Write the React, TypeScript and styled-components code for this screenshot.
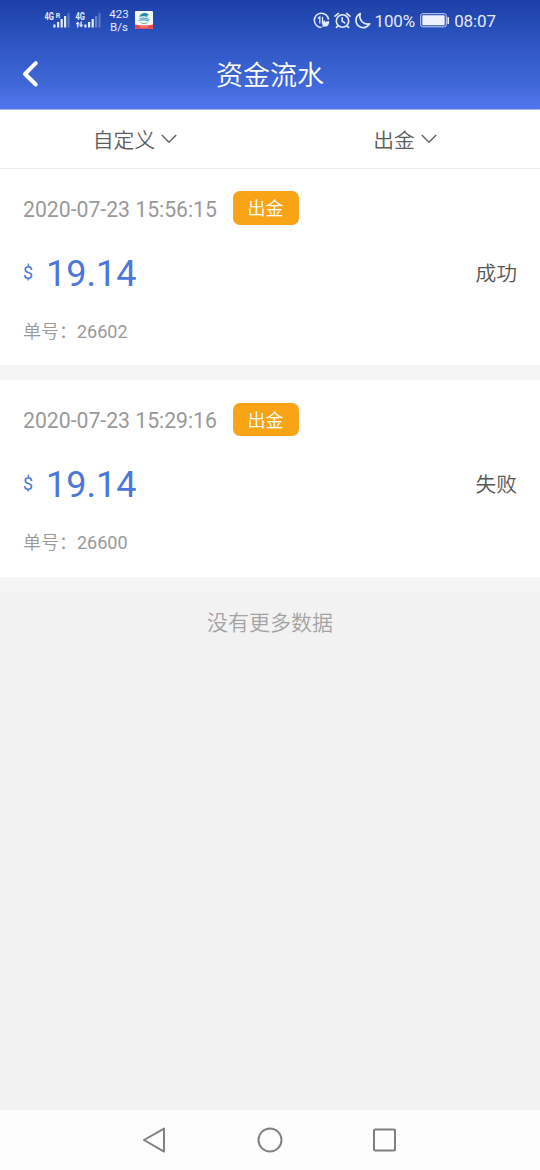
import React from 'react';
import styled, { createGlobalStyle } from 'styled-components';

const GlobalStyle = createGlobalStyle`
  * { box-sizing: border-box; }
  body {
    margin: 0;
    background: #f2f2f2;
    font-family: Roboto, "Noto Sans CJK SC", sans-serif;
  }
`;

const Screen = styled.div`
  display: flex;
  flex-direction: column;
  width: 100%;
  height: 1170px;
  background: #f2f2f2;
  overflow: hidden;
`;

const Header = styled.header`
  height: 110px;
  flex: none;
  color: #fff;
  background: linear-gradient(#1d3fa7 0, #2c53bf 38px, #4068d8 85px, #4f71ea 102px, #5075ea 100%);
  border-bottom: 1px solid #a5b6f0;
`;

const StatusBar = styled.div`
  display: flex;
  align-items: center;
  justify-content: space-between;
  height: 40px;
  padding: 0 44px 0 44px;
  color: #e4eafa;
`;

const StatusGroup = styled.div`
  display: flex;
  align-items: center;
`;

const Speed = styled.div`
  width: 20px;
  margin: 1px 6px 0 7px;
  font-size: 11.5px;
  line-height: 13px;
  text-align: center;
`;

const StatusText = styled.span<{ $gap?: number }>`
  margin-left: ${(p) => p.$gap ?? 0}px;
  padding-top: 1px;
  font-size: 17px;
  line-height: 20px;
  letter-spacing: -0.1px;
  white-space: nowrap;
`;

const StatusIcon = styled.svg<{ $gap?: number }>`
  display: block;
  flex: none;
  margin-left: ${(p) => p.$gap ?? 0}px;
`;

const TitleBar = styled.div`
  display: grid;
  grid-template-columns: 60px 1fr 60px;
  align-items: center;
  height: 69px;
`;

const BackButton = styled.button`
  display: flex;
  padding: 0 0 2px 21px;
  border: 0;
  background: none;
`;

const Title = styled.h1`
  margin: 3px 0 0;
  font-size: 27px;
  line-height: 40px;
  font-weight: 350;
  text-align: center;
`;

const Filters = styled.div`
  display: grid;
  grid-template-columns: 1fr 1fr;
  flex: none;
  height: 59px;
  background: #fff;
  border-bottom: 1px solid #eee;
`;

const Filter = styled.button`
  display: flex;
  align-items: center;
  justify-content: center;
  gap: 6px;
  padding: 0;
  border: 0;
  background: none;
  color: #5c5c5c;
  font: inherit;
  font-size: 20.8px;
  font-weight: 350;
`;

const Card = styled.article`
  display: flex;
  flex-direction: column;
  flex: none;
  height: 211.4px;
  padding: 22px 23px 0;
  background: #fff;
  border-bottom: 15px solid #f5f5f5;
`;

const CardTop = styled.div`
  display: flex;
  align-items: center;
  height: 34px;
`;

const DateText = styled.time`
  width: 209.5px;
  margin-top: 2px;
  color: #999;
  font-size: 21.2px;
  white-space: nowrap;
`;

const Badge = styled.span`
  width: 66px;
  height: 33.5px;
  padding-top: 1px;
  border-radius: 7px;
  background: #f8a416;
  color: #fff;
  font-size: 18px;
  font-weight: 350;
  line-height: 34px;
  text-align: center;
`;

const AmountRow = styled.div`
  display: flex;
  align-items: center;
  height: 50px;
  margin-top: 23px;
`;

const Currency = styled.span`
  width: 23px;
  padding-bottom: 2px;
  color: #4d76d8;
  font-size: 18px;
`;

const Amount = styled.strong`
  flex: 1;
  padding-top: 1px;
  color: #4d76dc;
  font-size: 36px;
  line-height: 50px;
  font-weight: 400;
`;

const Status = styled.span`
  padding-bottom: 3px;
  color: #555;
  font-size: 20.8px;
  font-weight: 350;
`;

const Order = styled.div`
  margin-top: 19px;
  color: #999;
  font-size: 18px;
  line-height: 30px;
`;

const OrderLabel = styled.span`
  font-weight: 350;
`;

const Empty = styled.p`
  flex: 1;
  margin: 0;
  padding-top: 15px;
  color: #a3a3a3;
  font-size: 21px;
  font-weight: 350;
  line-height: 32px;
  text-align: center;
`;

const NavBar = styled.nav`
  display: flex;
  align-items: center;
  justify-content: center;
  gap: 87px;
  flex: none;
  height: 60px;
  background: #fdfdfd;
`;

const NavIcon = styled.svg`
  display: block;
  fill: none;
  stroke: #808080;
  stroke-width: 2;
  stroke-linejoin: round;
`;

const Signal = ({ roaming }: { roaming?: boolean }) => (
  <StatusIcon width="27" height="20" $gap={roaming ? 0 : 4} fill="#e4eafa">
    <text x="0.5" y="9.5" fontSize="10.5" fontWeight="700" textLength="9.5" lengthAdjust="spacingAndGlyphs">4G</text>
    {roaming ? (
      <text x="11.8" y="7.5" fontSize="7" fontWeight="700">R</text>
    ) : (
      <path d="M2.7 11.5.5 14.2h1.5v3.3h1.4v-3.3h1.5zM6.1 17.5l2.2-2.7H6.8v-3.3H5.4v3.3H3.9z" />
    )}
    <rect x="9.3" y="14.5" width="2.2" height="3" />
    <rect x="13" y="12" width="2.2" height="5.5" />
    <rect x="16.6" y="9" width="2.2" height="8.5" />
    <rect x="20" y="6" width="2.2" height="11.5" opacity={roaming ? 1 : 0.35} />
    <rect x="23.5" y="3" width="2" height="14.5" opacity=".3" />
  </StatusIcon>
);

const AppIcon = () => (
  <StatusIcon width="18" height="18" viewBox="0 0 18 18">
    <rect width="18" height="18" rx="1" fill="#f4fafa" />
    <path d="M4 6C6 1.5 11 1 14 4L11.5 5 14.5 7C11 5 7 4.5 4 6Z" fill="#278ca2" />
    <path d="M4.5 7.5Q9 6.5 14.5 8.5M3.5 9.5Q9 8 14 10" stroke="#57a9c9" strokeWidth="1.2" fill="none" />
    <path d="M5.5 11.5c2 1.4 5 1.4 7 0" stroke="#73b893" fill="none" />
    <path d="M0 13.5q9 2 18 0V17a1 1 0 0 1-1 1H1a1 1 0 0 1-1-1Z" fill="#e34c50" />
    <path d="M5 16h8" stroke="#f5b2ac" strokeDasharray="1.5 .7" />
  </StatusIcon>
);

const DataIcon = () => (
  <StatusIcon width="17" height="17" viewBox="0 0 17 17" fill="none" stroke="#e4eafa" strokeWidth="1.5">
    <path d="M15.5 7.6A7.1 7.1 0 1 0 8.5 15.4" />
    <path d="M4.8 6.4 6.8 4.8v6.7M9.5 4.8v6.2l2.4-2.2" strokeWidth="1.3" />
    <path d="M9.5 12.5c1-3 3-3 6.8-3.3-.3 4-2.2 6.6-5.5 5.1l-1.5 1.3Z" fill="#e4eafa" stroke="none" />
  </StatusIcon>
);

const AlarmIcon = () => (
  <StatusIcon $gap={4} width="17" height="17" viewBox="0 0 17 17" fill="none" stroke="#e4eafa" strokeWidth="1.6" strokeLinecap="round">
    <circle cx="8.5" cy="9" r="6.2" />
    <path d="M8.2 5.7V9.2l2.5 1.6M1.1 4.2 4.4 1.4M15.9 4.2l-3.3-2.8M3.8 14 2.5 15.4M13.2 14l1.3 1.4" />
  </StatusIcon>
);

const MoonIcon = () => (
  <StatusIcon $gap={4} width="16" height="17" viewBox="0 0 16 17" fill="none" stroke="#e4eafa" strokeWidth="1.7" strokeLinejoin="round">
    <path d="M5.2 1.5C-.6 4.6-.2 12.8 5.3 15c3.9 1.5 7.6-.2 9.4-3.2C8.9 13.3 3.4 8.2 5.2 1.5Z" />
  </StatusIcon>
);

const BatteryIcon = () => (
  <StatusIcon $gap={5} width="30" height="15" viewBox="0 0 30 15">
    <rect x=".7" y=".7" width="25.6" height="13.1" rx="2" fill="none" stroke="#cbd5f4" strokeWidth="1" />
    <rect x="2.3" y="2.3" width="22.4" height="9.9" rx=".7" fill="#eceffc" />
    <rect x="27.4" y="4" width="1.6" height="7" rx=".5" fill="#e4eafa" />
  </StatusIcon>
);

const Chevron = () => (
  <svg width="16" height="10" viewBox="0 0 16 10" fill="none" stroke="#666" strokeWidth="1.5">
    <path d="M.8 1 8 8.2 15.2 1" />
  </svg>
);

const records = [
  { date: '2020-07-23 15:56:15', amount: '19.14', status: '成功', order: '26602' },
  { date: '2020-07-23 15:29:16', amount: '19.14', status: '失败', order: '26600' },
];

export default function App() {
  return (
    <Screen>
      <GlobalStyle />
      <Header>
        <StatusBar>
          <StatusGroup>
            <Signal roaming />
            <Signal />
            <Speed>423<br />B/s</Speed>
            <AppIcon />
          </StatusGroup>
          <StatusGroup>
            <DataIcon />
            <AlarmIcon />
            <MoonIcon />
            <StatusText $gap={3}>100%</StatusText>
            <BatteryIcon />
            <StatusText $gap={4}>08:07</StatusText>
          </StatusGroup>
        </StatusBar>
        <TitleBar>
          <BackButton aria-label="返回">
            <svg width="18" height="28" viewBox="0 0 18 28" fill="none" stroke="#fff" strokeWidth="4" strokeLinecap="round" strokeLinejoin="round">
              <path d="M14.8 3.2 4 14l10.8 10.5" />
            </svg>
          </BackButton>
          <Title>资金流水</Title>
        </TitleBar>
      </Header>
      <Filters>
        <Filter>自定义<Chevron /></Filter>
        <Filter>出金<Chevron /></Filter>
      </Filters>
      {records.map((r) => (
        <Card key={r.order}>
          <CardTop>
            <DateText>{r.date}</DateText>
            <Badge>出金</Badge>
          </CardTop>
          <AmountRow>
            <Currency>$</Currency>
            <Amount>{r.amount}</Amount>
            <Status>{r.status}</Status>
          </AmountRow>
          <Order><OrderLabel>单号：</OrderLabel>{r.order}</Order>
        </Card>
      ))}
      <Empty>没有更多数据</Empty>
      <NavBar>
        <NavIcon width="28" height="28"><path d="M23 2.6v23L3 14Z" /></NavIcon>
        <NavIcon width="28" height="28"><circle cx="14" cy="14" r="11.5" /></NavIcon>
        <NavIcon width="28" height="28"><rect x="3" y="3.5" width="21" height="21" rx="1" /></NavIcon>
      </NavBar>
    </Screen>
  );
}
